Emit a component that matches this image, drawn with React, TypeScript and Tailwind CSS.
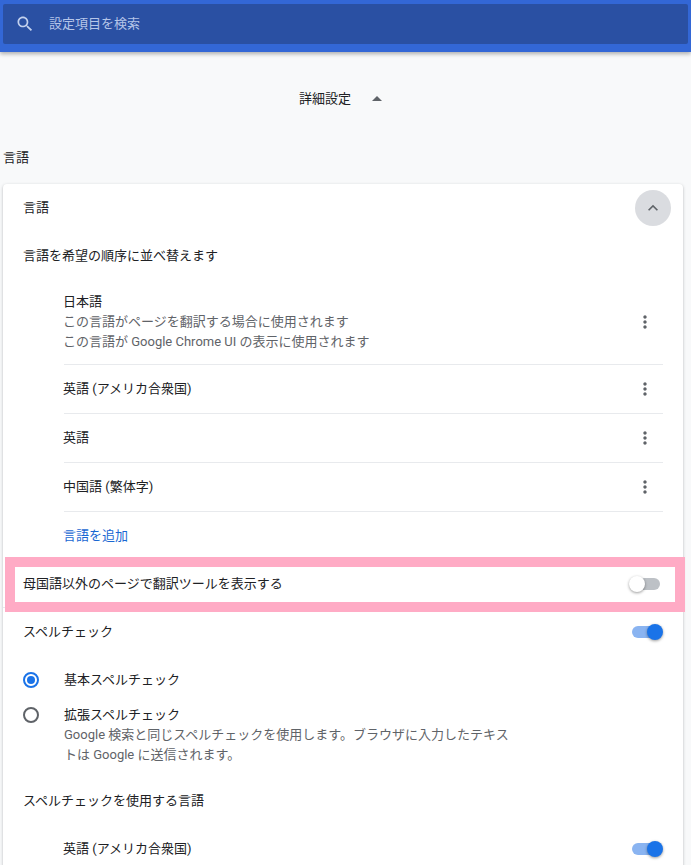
const font = "font-['Roboto','Noto_Sans_CJK_JP',sans-serif]";

function MoreButton() {
  return (
    <svg viewBox="0 0 24 24" className="w-5 h-5 fill-[#5f6368]">
      <path d="M12 8c1.1 0 2-.9 2-2s-.9-2-2-2-2 .9-2 2 .9 2 2 2zm0 2c-1.1 0-2 .9-2 2s.9 2 2 2 2-.9 2-2-.9-2-2-2zm0 6c-1.1 0-2 .9-2 2s.9 2 2 2 2-.9 2-2-.9-2-2-2z" />
    </svg>
  );
}

function Toggle({ on }: { on: boolean }) {
  return (
    <div className={`relative w-7 h-3 rounded-full ${on ? "bg-[#8ab4f1]" : "bg-[#bdc1c6]"}`}>
      <div
        className={`absolute top-[-2px] w-4 h-4 rounded-full shadow-[0_1px_3px_rgba(0,0,0,0.4)] ${
          on ? "right-[-3px] bg-[#1a73e8]" : "left-[-3px] bg-white"
        }`}
      />
    </div>
  );
}

function Radio({ on }: { on: boolean }) {
  return (
    <div
      className={`w-4 h-4 rounded-full border-2 flex items-center justify-center shrink-0 ${
        on ? "border-[#1a73e8]" : "border-[#5f6368]"
      }`}
    >
      {on && <div className="w-2 h-2 rounded-full bg-[#1a73e8]" />}
    </div>
  );
}

function LanguageRow({ name }: { name: string }) {
  return (
    <div className="h-[49px] ml-[61px] mr-5 flex items-center justify-between border-b border-[#e8eaed] pr-2">
      <span className="-ml-px">{name}</span>
      <MoreButton />
    </div>
  );
}

export default function App() {
  return (
    <div className={`${font} h-[865px] overflow-hidden bg-[#f8f9fa] text-[13px] leading-5 text-[#202124]`}>
      <header className="h-[52px] bg-[#3367d6] pt-1 px-[3px] shadow-[0_2px_4px_rgba(0,0,0,0.3)] relative">
        <div className="h-10 bg-[#2a50a3] rounded-[2px] flex items-center pl-3 gap-[14px]">
          <svg viewBox="0 0 24 24" className="w-5 h-5 fill-[#c3d1ee]">
            <path d="M15.5 14h-.79l-.28-.27C15.41 12.59 16 11.11 16 9.5 16 5.91 13.09 3 9.5 3S3 5.91 3 9.5 5.91 16 9.5 16c1.61 0 3.09-.59 4.23-1.57l.27.28v.79l5 4.99L20.49 19l-4.99-5zm-6 0C7.01 14 5 11.99 5 9.5S7.01 5 9.5 5 14 7.01 14 9.5 11.99 14 9.5 14z" />
          </svg>
          <span className="text-[#b5c5e8]">設定項目を検索</span>
        </div>
      </header>

      <div className="mt-[23px] h-12 pr-[3px] flex items-center justify-center gap-[14px]">
        <span>詳細設定</span>
        <svg viewBox="0 0 24 24" className="w-6 h-6 fill-[#5f6368]">
          <path d="M7 14l5-5 5 5z" />
        </svg>
      </div>

      <h2 className="mt-[25px] h-5 pl-[3px] text-[13px] font-normal">言語</h2>

      <section className="mt-4 mx-[3px] w-[680px] bg-white rounded-[4px] shadow-[0_1px_3px_rgba(60,64,67,0.35)]">
        <div className="h-12 pl-5 pr-3 flex items-center justify-between">
          <span>言語</span>
          <div className="w-9 h-9 rounded-full bg-[#dadce0] flex items-center justify-center">
            <svg viewBox="0 0 24 24" className="w-5 h-5 fill-[#5f6368]">
              <path d="M12 8l-6 6 1.41 1.41L12 10.83l4.59 4.58L18 14z" />
            </svg>
          </div>
        </div>

        <div className="h-[47px] pl-5 flex items-center">言語を希望の順序に並べ替えます</div>

        <div className="ml-[61px] mr-5 pt-[13px] pb-3 pr-2 flex items-center justify-between border-b border-[#e8eaed]">
          <div className="-ml-px">
            <div>日本語</div>
            <div className="text-[#5f6368]">この言語がページを翻訳する場合に使用されます</div>
            <div className="text-[#5f6368]">この言語が Google Chrome UI の表示に使用されます</div>
          </div>
          <MoreButton />
        </div>
        <LanguageRow name="英語 (アメリカ合衆国)" />
        <LanguageRow name="英語" />
        <LanguageRow name="中国語 (繁体字)" />

        <div className="h-12 pl-[60px] flex items-center text-[#1967d2]">言語を追加</div>

        <div className="relative h-12 pl-5 pr-[23px] flex items-center justify-between border-b border-[#e8eaed]">
          <span>母国語以外のページで翻訳ツールを表示する</span>
          <Toggle on={false} />
          <div className="absolute left-[2px] top-[-3px] w-[680px] h-[55px] border-10 border-[#ffabc5]" />
        </div>

        <div className="h-12 pl-5 pr-[23px] flex items-center justify-between">
          <span>スペルチェック</span>
          <Toggle on />
        </div>

        <div className="h-12 pl-5 flex items-center gap-[25px]">
          <Radio on />
          <span>基本スペルチェック</span>
        </div>

        <div className="pl-5 pb-3 flex items-start gap-[25px]">
          <div className="h-[22px] flex items-center">
            <Radio on={false} />
          </div>
          <div className="pt-px">
            <div>拡張スペルチェック</div>
            <div className="text-[#5f6368]">
              Google 検索と同じスペルチェックを使用します。ブラウザに入力したテキス
              <br />
              トは Google に送信されます。
            </div>
          </div>
        </div>

        <div className="h-12 pl-5 flex items-center">スペルチェックを使用する言語</div>

        <div className="h-12 pl-[60px] pr-[23px] flex items-center justify-between">
          <span>英語 (アメリカ合衆国)</span>
          <Toggle on />
        </div>
      </section>
    </div>
  );
}
